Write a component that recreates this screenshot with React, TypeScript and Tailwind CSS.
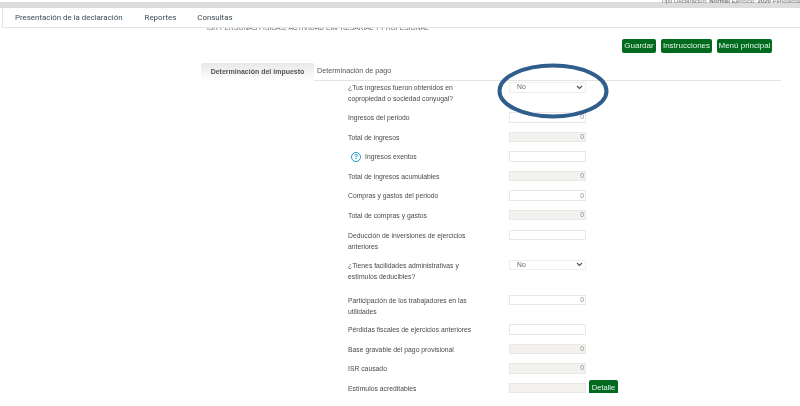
const rows = [
  { label: "¿Tus ingresos fueron obtenidos en copropiedad o sociedad conyugal?", kind: "select", h: "h-[30px]" },
  { label: "Ingresos del periodo", kind: "input", value: "0", h: "h-[19.6px]" },
  { label: "Total de ingresos", kind: "readonly", value: "0", h: "h-[19.6px]" },
  { label: "Ingresos exentos", kind: "input", help: true, h: "h-[19.6px]" },
  { label: "Total de ingresos acumulables", kind: "readonly", value: "0", h: "h-[19.6px]" },
  { label: "Compras y gastos del periodo", kind: "input", value: "0", h: "h-[19.6px]" },
  { label: "Total de compras y gastos", kind: "readonly", value: "0", h: "h-[19.6px]" },
  { label: "Deducción de inversiones de ejercicios anteriores", kind: "input", h: "h-[30px]" },
  { label: "¿Tienes facilidades administrativas y estímulos deducibles?", kind: "select", h: "h-[35px]" },
  { label: "Participación de los trabajadores en las utilidades", kind: "input", value: "0", h: "h-[29.5px]" },
  { label: "Pérdidas fiscales de ejercicios anteriores", kind: "input", h: "h-[19.6px]" },
  { label: "Base gravable del pago provisional", kind: "readonly", value: "0", h: "h-[19.6px]" },
  { label: "ISR causado", kind: "readonly", value: "0", h: "h-[19.6px]" },
  { label: "Estímulos acreditables", kind: "readonly", detail: true, h: "h-[19.6px]" },
];

function Field({ row }: { row: (typeof rows)[number] }) {
  if (row.kind === "select") {
    return (
      <div className="w-[77px] h-[10.5px] border border-[#eeeeee] bg-white flex items-center justify-between pl-[7px] pr-[2px] text-[#666666]">
        <span>No</span>
        <svg width="7" height="5" viewBox="0 0 7 5" fill="none" stroke="#555555" strokeWidth="1.2">
          <path d="M1 1l2.5 2.5L6 1" />
        </svg>
      </div>
    );
  }
  return (
    <div
      className={`w-[77px] h-[10.5px] border border-[#e8e8e8] flex items-center justify-end pr-[1px] text-[#888888] ${
        row.kind === "readonly" ? "bg-[#f3f2ef]" : "bg-white"
      }`}
    >
      {row.value}
    </div>
  );
}

export default function App() {
  return (
    <div className="relative w-[800px] h-[406px] overflow-hidden bg-white font-['Liberation_Sans',sans-serif] text-[6.8px] text-[#4a4a4a] blur-[0.35px]">
      <div className="h-[8px] bg-gradient-to-b from-white from-20% to-[#dddddd] to-30% pl-[661px] text-[6px] leading-[3px] text-[#777777] whitespace-nowrap overflow-hidden">
        Tipo Declaración: <b>Normal</b> Ejercicio: <b>2020</b> Periodicidad
      </div>
      <nav className="relative z-10 h-[20px] ml-[2px] bg-white border-l border-b border-[#e4e4e4] flex items-center pl-[12px] font-['Roboto',sans-serif] text-[7.9px] text-[#3c4a54]">
        <span className="mr-[22px]">Presentación de la declaración</span>
        <span className="mr-[21px]">Reportes</span>
        <span>Consultas</span>
      </nav>
      <div className="-mt-[3px] h-[14px] pl-[207px] text-[6.7px] leading-[6px] text-[#666666] whitespace-nowrap">
        ISR PERSONAS FÍSICAS, ACTIVIDAD EMPRESARIAL Y PROFESIONAL
      </div>

      <div className="h-[24px] flex justify-end gap-[5px] pr-[28px] text-[#e8f3e8] text-[8px]">
        <button className="h-[14px] w-[34px] rounded-[2px] bg-[#006b1f]">Guardar</button>
        <button className="h-[14px] w-[51px] rounded-[2px] bg-[#006b1f]">Instrucciones</button>
        <button className="h-[14px] w-[55px] rounded-[2px] bg-[#006b1f]">Menú principal</button>
      </div>

      <div className="ml-[201px] mr-[19px] h-[18px] flex border-b border-[#e4e4e4]">
        <div className="w-[113px] h-[18px] rounded-t-[2px] bg-gradient-to-b from-[#e8e8e8] to-white flex items-center justify-center font-bold text-[7px] text-[#555555]">
          Determinación del impuesto
        </div>
        <div className="pl-[3px] pt-[3px] text-[#555555] text-[7.2px]">Determinación de pago</div>
      </div>

      <div className="h-[312px] overflow-hidden pt-[1px] pl-[348px]">
        {rows.map((row) => (
          <div key={row.label} className={`flex items-start ${row.h}`}>
            <div className="w-[161px] pr-[30px] leading-[11px]">
              {row.help ? (
                <span className="flex items-start h-[11px] gap-[4px] pl-[3px]">
                  <span className="mt-[1px] w-[10px] h-[10px] rounded-full border border-[#1a9bc4] text-[#1a9bc4] leading-none font-bold flex items-center justify-center">
                    ?
                  </span>
                  {row.label}
                </span>
              ) : (
                row.label
              )}
            </div>
            <Field row={row} />
            {row.detail && (
              <button className="ml-[3px] -mt-[3px] h-[16px] w-[29px] rounded-[2px] bg-[#006b1f] text-[#e8f3e8] text-[7.5px]">
                Detalle
              </button>
            )}
          </div>
        ))}
      </div>

      {/* hand drawn circle over the first select */}
      <svg className="absolute left-[495px] top-[61px]" width="116" height="60" viewBox="0 0 116 60" fill="none">
        <ellipse cx="58" cy="30" rx="53.5" ry="25.5" stroke="#2f5d8c" strokeWidth="4" />
      </svg>
    </div>
  );
}
